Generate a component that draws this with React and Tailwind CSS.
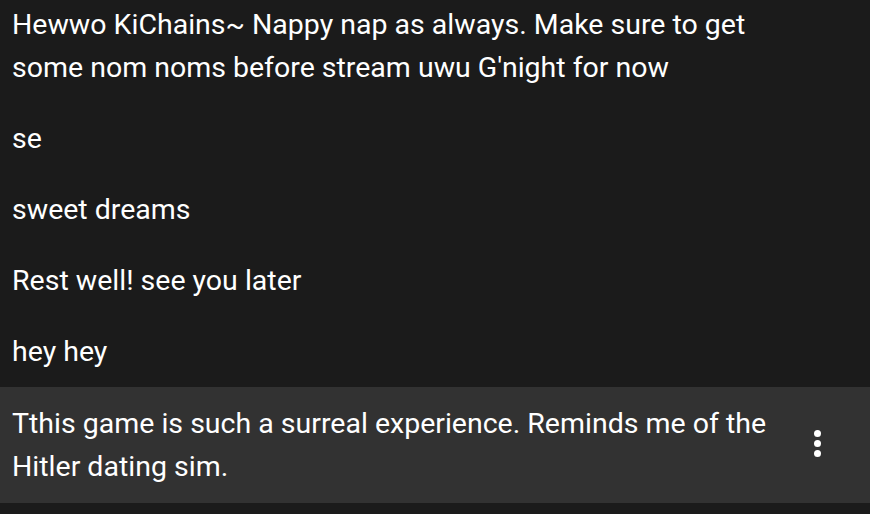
import React from 'react';

const messages = [
    { id: 1, text: 'Hewwo KiChains~ Nappy nap as always. Make sure to get some nom noms before stream uwu G\'night for now', first: true },
    { id: 2, text: 'se' },
    { id: 3, text: 'sweet dreams' },
    { id: 4, text: 'Rest well! see you later' },
    { id: 5, text: 'hey hey' },
    { id: 6, text: 'Tthis game is such a surreal experience. Reminds me of the Hitler dating sim.', active: true },
];

const App = () => {
    return (
        <div className="w-[870px] h-[514px] overflow-hidden bg-[#1b1b1b] text-white font-['Roboto',sans-serif]">
            {messages.map((m) => (
                <div
                    key={m.id}
                    className={`flex items-center pl-3 pr-10 ${m.first ? 'pt-[3px] pb-[14px]' : m.active ? 'bg-[#323232] py-[15px]' : 'py-[14px]'}`}
                >
                    <p className="flex-1 text-[28.5px] leading-[43px] max-w-[770px]">{m.text}</p>
                    {m.active && (
                        <div className="ml-auto flex flex-col items-center gap-[3px] mr-[9px] mb-[3px]">
                            <span className="w-[7px] h-[7px] rounded-full bg-white" />
                            <span className="w-[7px] h-[7px] rounded-full bg-white" />
                            <span className="w-[7px] h-[7px] rounded-full bg-white" />
                        </div>
                    )}
                </div>
            ))}
        </div>
    );
};

export default App;
